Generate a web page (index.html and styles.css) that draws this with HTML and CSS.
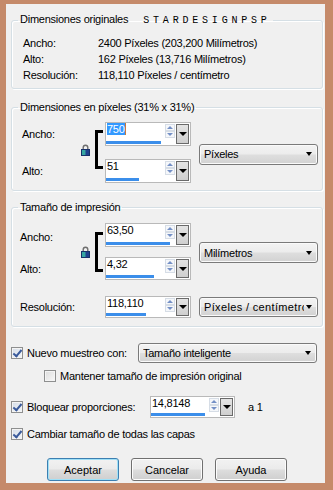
FILE: index.html
```html
<!DOCTYPE html>
<html lang="es">
<head>
    <meta charset="UTF-8">
    <title>Cambiar tamaño</title>
    <link rel="stylesheet" href="styles.css">
</head>
<body>
    <div class="frame">
        <!-- Dimensiones originales -->
        <fieldset class="group g1">
            <legend>Dimensiones originales<span class="mark">STARDESIGNPSP</span></legend>
            <div class="info">
                <span>Ancho:</span><span>2400 Píxeles (203,200 Milímetros)</span>
                <span>Alto:</span><span>162 Píxeles (13,716 Milímetros)</span>
                <span>Resolución:</span><span>118,110 Píxeles / centímetro</span>
            </div>
        </fieldset>

        <!-- Dimensiones en píxeles -->
        <fieldset class="group g2">
            <legend>Dimensiones en píxeles (31% x 31%)</legend>
            <div class="dims">
                <span class="lbl row-a">Ancho:</span>
                <svg class="lock" width="9" height="12" viewBox="0 0 9 12">
                    <path d="M2.2 6V3.6a2.3 2.3 0 0 1 4.6 0V6" fill="none" stroke="#6f6f6f" stroke-width="1.4"/>
                    <rect x="0.5" y="5.5" width="8" height="6" fill="#1e3f8c" stroke="#17306a"/>
                    <rect x="1" y="6" width="3.5" height="5" fill="#35a6a2"/>
                </svg>
                <span class="bracket"></span>
                <div class="spin row-a">
                    <div class="main">
                        <div class="top"><span class="val"><span class="hl">750</span></span><span class="arrows"><span class="up"></span><span class="dn"></span></span></div>
                        <span class="bar" style="width:55px"></span>
                    </div>
                    <span class="drop"></span>
                </div>
                <span class="lbl row-b">Alto:</span>
                <div class="spin row-b">
                    <div class="main">
                        <div class="top"><span class="val">51</span><span class="arrows"><span class="up"></span><span class="dn"></span></span></div>
                        <span class="bar" style="width:33px"></span>
                    </div>
                    <span class="drop"></span>
                </div>
                <div class="combo unit">
                    <span class="combo-text">Píxeles</span><span class="combo-arrow"></span>
                </div>
            </div>
        </fieldset>

        <!-- Tamaño de impresión -->
        <fieldset class="group g3">
            <legend>Tamaño de impresión</legend>
            <div class="dims">
                <span class="lbl row-a">Ancho:</span>
                <svg class="lock" width="9" height="12" viewBox="0 0 9 12">
                    <path d="M2.2 6V3.6a2.3 2.3 0 0 1 4.6 0V6" fill="none" stroke="#6f6f6f" stroke-width="1.4"/>
                    <rect x="0.5" y="5.5" width="8" height="6" fill="#1e3f8c" stroke="#17306a"/>
                    <rect x="1" y="6" width="3.5" height="5" fill="#35a6a2"/>
                </svg>
                <span class="bracket"></span>
                <div class="spin row-a">
                    <div class="main">
                        <div class="top"><span class="val">63,50</span><span class="arrows"><span class="up"></span><span class="dn"></span></span></div>
                        <span class="bar" style="width:64px"></span>
                    </div>
                    <span class="drop"></span>
                </div>
                <span class="lbl row-b">Alto:</span>
                <div class="spin row-b">
                    <div class="main">
                        <div class="top"><span class="val">4,32</span><span class="arrows"><span class="up"></span><span class="dn"></span></span></div>
                        <span class="bar" style="width:48px"></span>
                    </div>
                    <span class="drop"></span>
                </div>
                <div class="combo unit">
                    <span class="combo-text">Milímetros</span><span class="combo-arrow"></span>
                </div>
                <span class="lbl row-c">Resolución:</span>
                <div class="spin row-c">
                    <div class="main">
                        <div class="top"><span class="val">118,110</span><span class="arrows"><span class="up"></span><span class="dn"></span></span></div>
                        <span class="bar" style="width:40px"></span>
                    </div>
                    <span class="drop"></span>
                </div>
                <div class="combo res">
                    <span class="combo-text">Píxeles / centímetro</span><span class="combo-arrow"></span>
                </div>
            </div>
        </fieldset>

        <!-- Opciones -->
        <div class="opt opt1">
            <span class="chk on"></span>
            <span class="opt-text">Nuevo muestreo con:</span>
            <div class="combo wide">
                <span class="combo-text">Tamaño inteligente</span><span class="combo-arrow"></span>
            </div>
        </div>
        <div class="opt opt2">
            <span class="chk"></span>
            <span>Mantener tamaño de impresión original</span>
        </div>
        <div class="opt opt3">
            <span class="chk on"></span>
            <span class="opt-text">Bloquear proporciones:</span>
            <div class="spin">
                <div class="main">
                    <div class="top"><span class="val">14,8148</span><span class="arrows"><span class="up"></span><span class="dn"></span></span></div>
                    <span class="bar" style="width:54px"></span>
                </div>
                <span class="drop"></span>
            </div>
            <span class="ratio">a 1</span>
        </div>
        <div class="opt opt4">
            <span class="chk on"></span>
            <span>Cambiar tamaño de todas las capas</span>
        </div>

        <div class="buttons">
            <button class="btn default">Aceptar</button>
            <button class="btn">Cancelar</button>
            <button class="btn">Ayuda</button>
        </div>
    </div>
</body>
</html>
```

FILE: styles.css
```css
* {
    margin: 0;
    padding: 0;
    box-sizing: border-box;
}

body {
    font-family: "Liberation Sans", Arial, sans-serif;
    font-size: 11px;
    letter-spacing: -0.25px;
    color: #000;
    background: #c58a6a;
    overflow: hidden;
}

.frame {
    width: 333px;
    height: 490px;
    border-style: solid;
    border-color: #c58a6a;
    border-width: 4px 8px 7px 6px;
    background: #f0f0f0;
    padding: 0 2px 0 5px;
}

/* Cadres de groupe */
.group {
    border: 1px solid #d5dfe5;
    border-radius: 3px;
    box-shadow: inset 1px 1px 0 #fff, 1px 1px 0 #fff;
    min-width: 0;
}

.group legend {
    margin-left: 6px;
    padding: 0 2px;
    line-height: 14px;
}

.g1 { margin-top: 8px; }
.g2 { margin-top: 11px; }
.g3 { margin-top: 9px; }

.mark {
    margin-left: 15px;
    font-family: "Liberation Mono", monospace;
    font-size: 10px;
    letter-spacing: 3.8px;
}

.info {
    display: grid;
    grid-template-columns: 75px auto;
    line-height: 16px;
    padding: 7px 0 5px 11px;
}

/* Grilles des dimensions */
.dims {
    display: grid;
}

.g2 .dims {
    grid-template-columns: 59px 14px 10px 86px 1fr;
    grid-template-rows: 24px 13px 24px;
    padding: 8px 4px 7px 10px;
}

.g3 .dims {
    grid-template-columns: 61px 14px 10px 86px 1fr;
    grid-template-rows: 24px 10px 23px 16px 22px;
    padding: 9px 4px 8px 8px;
}

.lbl {
    grid-column: 1;
    align-self: center;
}

.row-a { grid-row: 1; }
.row-b { grid-row: 3; }
.row-c { grid-row: 5; }

.g3 .lbl.row-a { padding-top: 3px; }

.dims .spin { grid-column: 4; }

.lock {
    grid-column: 2;
    grid-row: 1 / 4;
    align-self: center;
}

.g2 .lock { margin-bottom: 6px; }

.bracket {
    grid-column: 3;
    grid-row: 1 / 4;
    width: 8px;
    border: 3px solid #000;
    border-right: 0;
}

.g2 .bracket { margin: 8px 0 14px; }
.g3 .bracket { margin: 9px 0 8px; }

/* Champ numérique */
.spin {
    display: flex;
    width: 86px;
    background: #fff;
    border: 1px solid #b9b9b9;
    padding: 0 1px 1px 0;
}

.main {
    flex: 1;
    display: flex;
    flex-direction: column;
    justify-content: space-between;
}

.top {
    display: flex;
}

.val {
    flex: 1;
    padding-left: 1px;
    line-height: 13px;
}

.hl {
    background: #3399ff;
    color: #fff;
    border-right: 1px solid #c87a3a;
}

.arrows {
    width: 10px;
    display: flex;
    flex-direction: column;
    padding-top: 1px;
}

.up,
.dn {
    height: 7px;
    border: 1px solid #d6dde6;
    background: #f5f7fa;
    display: flex;
    align-items: center;
    justify-content: center;
}

.up::after {
    content: "";
    border-left: 3px solid transparent;
    border-right: 3px solid transparent;
    border-bottom: 3px solid #7490c6;
}

.dn::after {
    content: "";
    border-left: 3px solid transparent;
    border-right: 3px solid transparent;
    border-top: 3px solid #7490c6;
}

.bar {
    display: block;
    height: 3px;
    background: #3b8eea;
}

.drop {
    width: 13px;
    margin: 1px 0 0 1px;
    border: 1px solid #6a6a6a;
    background: linear-gradient(#e4e4e4, #cfcfcf);
    display: flex;
    align-items: center;
    justify-content: center;
}

.drop::after {
    content: "";
    border-left: 4px solid transparent;
    border-right: 4px solid transparent;
    border-top: 4px solid #000;
}

/* Listes déroulantes */
.combo {
    display: flex;
    align-items: center;
    border: 1px solid #7a7a7a;
    border-radius: 3px;
    background: linear-gradient(#f3f3f3 0%, #ececec 48%, #dedede 52%, #d2d2d2 100%);
    box-shadow: inset 0 0 0 1px #fafafa;
    padding: 0 5px 0 4px;
}

.combo-text {
    flex: 1;
    overflow: hidden;
    white-space: nowrap;
}

.combo-arrow {
    flex: none;
    margin-left: 2px;
    border-left: 3.5px solid transparent;
    border-right: 3.5px solid transparent;
    border-top: 4px solid #000;
}

.dims .combo {
    grid-column: 5;
    justify-self: end;
    align-self: center;
    width: 119px;
}

.g2 .unit {
    grid-row: 1 / 4;
    height: 21px;
    margin-top: 3px;
}

.g3 .unit {
    grid-row: 1 / 4;
    height: 21px;
    margin-top: 2px;
}

.g3 .res {
    grid-row: 5;
    height: 20px;
}

.res .combo-text { letter-spacing: 0.35px; }

/* Options */
.opt {
    display: flex;
    align-items: center;
}

.chk {
    flex: none;
    width: 12px;
    height: 12px;
    margin-right: 4px;
    border: 1px solid #8e8f8f;
    background: linear-gradient(135deg, #dcdcdc, #f8f8f8);
    box-shadow: inset 0 0 0 1px #f4f4f4;
    display: flex;
    align-items: center;
    justify-content: center;
}

.chk.on {
    background: linear-gradient(135deg, #d5dde8, #f2f5f9);
}

.chk.on::after {
    content: "";
    width: 3px;
    height: 7px;
    margin-top: -2px;
    border: solid #3a5a9b;
    border-width: 0 2px 2px 0;
    transform: rotate(40deg);
}

.opt1 {
    margin-top: 16px;
    height: 20px;
}

.opt1 .opt-text { width: 111px; }

.wide {
    width: 179px;
    height: 20px;
}

.opt2 {
    margin-top: 6px;
    height: 14px;
    padding-left: 33px;
}

.opt3 {
    margin-top: 13px;
    height: 22px;
}

.opt3 .opt-text { width: 123px; }

.opt3 .spin {
    width: 85px;
    height: 22px;
}

.ratio { margin-left: 13px; }

.opt4 {
    margin-top: 9px;
    height: 14px;
}

/* Boutons */
.buttons {
    display: flex;
    gap: 12px;
    margin-top: 17px;
    padding-left: 36px;
}

.btn {
    width: 72px;
    height: 23px;
    font: inherit;
    color: #000;
    border: 1px solid #707070;
    border-radius: 3px;
    background: linear-gradient(#f2f2f2 0%, #ebebeb 48%, #dddddd 52%, #cfcfcf 100%);
    box-shadow: inset 0 0 0 1px #fcfcfc;
}

.btn.default {
    border-color: #3c7fb1;
    box-shadow: inset 0 0 0 1px #9fe0f7;
}
```
